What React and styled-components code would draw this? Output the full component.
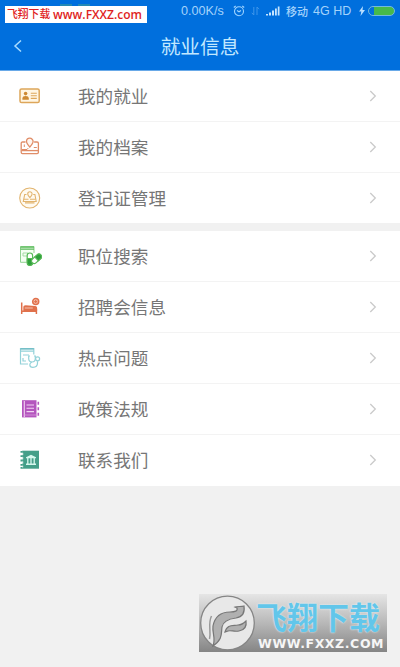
import styled, { createGlobalStyle } from "styled-components";

const GlobalStyle = createGlobalStyle`
  body {
    margin: 0;
    background: #f1f1f1;
    font-family: Roboto, "Noto Sans CJK SC", sans-serif;
  }
`;

const CardIcon = () => (
  <svg width="24" height="24" viewBox="0 0 24 24" fill="none" stroke="#dda65a" strokeWidth="1.5">
    <rect x="2" y="5" width="19.2" height="13.6" rx="1.6" fill="#fff6e4" />
    <circle cx="7.6" cy="9.6" r="1.8" fill="#cd8a35" stroke="none" />
    <path d="M4.400 15.800v-1.400c0-1.700 1.200-2.500 3.200-2.500s3.200.8 3.200 2.500v1.400z" fill="#cd8a35" stroke="none" />
    <path d="M12.800 9.200h6M12.800 11.800h6M12.800 14.400h6" strokeWidth="1.100" />
  </svg>
);

const MapIcon = () => (
  <svg width="24" height="24" viewBox="0 0 24 24" fill="none" stroke="#e08d68" strokeWidth="1.300">
    <path d="M7.500 7H4.500c-.8 0-1.300.5-1.300 1.300v9c0 .8.5 1.300 1.300 1.300h14.600c.8 0 1.300-.5 1.300-1.300v-9c0-.8-.5-1.300-1.300-1.300h-3" />
    <path d="M11.800 12C9.600 9.500 8.500 8.200 8.500 6.500a3.300 3.300 0 0 1 6.600 0c0 1.700-1.100 3-3.300 5.500z" fill="#fff6f0" />
    <path d="M3.500 15.600h17" />
    <path d="M4 14.500h5l1.300-1.500M6.300 9.500v2.500M15.800 12.500h3" strokeWidth="1" />
  </svg>
);

const BadgeIcon = () => (
  <svg width="24" height="24" viewBox="0 0 24 24" fill="none" stroke="#e2b46e" strokeWidth="1.100">
    <circle cx="11.700" cy="12" r="10" fill="#fffaf0" />
    <path d="M8.500 8.500H6.700L5.300 15.500h12.900l-1.300-7h-1.700" />
    <path d="M11.900 11.700c-1.500-1.700-2.200-2.600-2.200-3.700a2.200 2.200 0 0 1 4.400 0c0 1.100-.7 2-2.200 3.700z" />
    <path d="M6 13.300h4.500M12 13.300h5.500M7 16.900h9.500" />
  </svg>
);

const PillIcon = () => (
  <svg width="24" height="24" viewBox="0 0 24 24" fill="none" stroke="#57b957" strokeWidth="1">
    <path d="M16 9V2.500H2.500v15.800H8.500" stroke="#92d292" fill="#f4fff2" />
    <path d="M2.500 3.200h13.500M2.500 5.200h13.500" strokeWidth="1.200" />
    <path d="M5 9h5v3H5z" stroke="#a5daa5" />
    <rect x="9.200" y="9" width="5.400" height="12.500" rx="2.700" fill="#fff" strokeWidth="1.200" />
    <path d="M9.200 14.500h5.400v4.300a2.700 2.700 0 0 1-5.400 0z" fill="#2f9f3b" />
    <g transform="rotate(48 19 15)">
      <rect x="16" y="9.500" width="5.200" height="11.500" rx="2.600" fill="#fff" strokeWidth="1.200" />
      <path d="M16 15.300v-3.200a2.600 2.600 0 0 1 5.200 0v3.200z" fill="#2f9f3b" />
    </g>
  </svg>
);

const BedIcon = () => (
  <svg width="24" height="24" viewBox="0 0 24 24" fill="none" stroke="#e0714c" strokeWidth="1.500">
    <path d="M3.700 7.500v11.500M18.400 14v5M3.700 16.200h14.700" />
    <path d="M5.300 14.500v-1.800c0-1.800.8-2.500 2.300-2.500l9.600.8c1.400.2 1.900.9 1.900 2.200V16H5.300z" fill="#e0714c" stroke="none" />
    <path d="M6.800 13h8" stroke="#f8cdbd" strokeWidth=".9" />
    <circle cx="17.700" cy="6.600" r="3" fill="#f5c1ae" />
    <path d="M17.700 5.100v3M16.200 6.600h3" strokeWidth="1.100" />
  </svg>
);

const StethoscopeIcon = () => (
  <svg width="24" height="24" viewBox="0 0 24 24" fill="none" stroke="#93d2d9" strokeWidth="1.200">
    <path d="M15.800 8.500V2.500H2.500v15.500h7.500" />
    <path d="M2.500 2.900h13.300" strokeWidth="1.500" stroke="#70bcc5" />
    <path d="M2.500 5.200h13.300M5 9h6M5 12v3h3" />
    <path d="M12 10h-1.300v2.500c0 2.200 1.300 3.500 3.300 3.500s3.300-1.300 3.300-3.500V10H16" />
    <path d="M13.800 16c-1.500.8-2 1.700-2 2.700 0 1.600 1.300 2.600 3.100 2.600 2.600 0 4.600-1.700 4.600-4.300v-1.800" />
    <circle cx="19.600" cy="12.800" r="2" fill="#fff" />
  </svg>
);

const BookIcon = () => (
  <svg width="24" height="24" viewBox="0 0 24 24" fill="#b455be">
    <path d="M4 3.200h14.500v17.200H4z" />
    <path d="M19.500 4.800h1.600v3h-1.600zM19.500 10.200h1.600v3h-1.600zM19.500 15.800h1.600v3h-1.600z" />
    <path d="M6.300 4v16M8.500 8h7.500M8.500 11.300h7.500M8.500 14.600h7.500" stroke="#f1d4f3" strokeWidth="1.100" />
    <path d="M6.500 18h12" stroke="#d493d9" strokeWidth=".9" />
  </svg>
);

const BankIcon = () => (
  <svg width="24" height="24" viewBox="0 0 24 24" fill="#449f89">
    <path d="M4.200 2.700h16.800v18H4.200z" />
    <path d="M2.500 3h2v1.800h-2zM2.500 7.300h2v1.800h-2zM2.500 11.600h2v1.800h-2zM2.500 15.900h2v1.800h-2zM2.500 19h2v1.700h-2z" />
    <path d="M4.700 4.800v14.500" stroke="#fff" strokeWidth="1" strokeDasharray="2.300 2" />
    <path d="M8 9.200l5-2.500 5 2.500v1H8zM8 15.600h10v1.300H8z" fill="#d6f8ee" />
    <path d="M9.800 10v6M13 10v6M16.200 10v6" stroke="#d6f8ee" strokeWidth="1.300" />
  </svg>
);

const Chevron = () => (
  <svg width="8" height="12" viewBox="0 0 8 12" fill="none" stroke="#cacaca" strokeWidth="1.300">
    <path d="M1.300 1l5 5-5 5" />
  </svg>
);

const groups = [
  [
    { label: "我的就业", Icon: CardIcon },
    { label: "我的档案", Icon: MapIcon },
    { label: "登记证管理", Icon: BadgeIcon },
  ],
  [
    { label: "职位搜索", Icon: PillIcon },
    { label: "招聘会信息", Icon: BedIcon },
    { label: "热点问题", Icon: StethoscopeIcon },
    { label: "政策法规", Icon: BookIcon },
    { label: "联系我们", Icon: BankIcon },
  ],
];

const StatusBar = () => (
  <Status>
    <Speed>0.00K/s</Speed>
    <svg width="12" height="12" viewBox="0 0 12 12" fill="none" stroke="#9fd4ff" strokeWidth="1.100">
      <circle cx="6" cy="6.300" r="4.500" />
      <path d="M4 5.500l2 1.300 2-1.300M.8 2.500L2.700 1M11.200 2.500L9.300 1" />
    </svg>
    <Arrows width="9" height="10" viewBox="0 0 9 10" fill="none" stroke="#3f96ea" strokeWidth="1">
      <path d="M2.800 1v8L.8 6.800M6 9V1l2 2.200" />
    </Arrows>
    <Signal width="14" height="10" viewBox="0 0 14 10" fill="#c4e4ff">
      <path d="M0 8h2v1.500H0zM3 6.500h2v3H3zM6 4.500h2v5H6zM9 2.500h1.800v7H9zM11.800 0.500h1.700v9h-1.700z" />
    </Signal>
    <Carrier>移动</Carrier>
    <Network>4G HD</Network>
    <Bolt width="6" height="10" viewBox="0 0 6 10" fill="#b9dfff">
      <path d="M4 0L0 5.500h2.300L1.500 10 6 4H3.500z" />
    </Bolt>
    <Battery />
  </Status>
);

const Watermark = () => (
  <WatermarkBox>
    <svg width="57" height="58" viewBox="0 0 57 58">
      <circle cx="28.500" cy="29" r="26.800" fill="#e8e8e8" stroke="#858585" strokeWidth="1.300" />
      <path
        d="M14 52c3-8-1-13 0-20 2-10 9-14 17-14 5 0 8-1 7-4l-2-1c3-1 6 0 9-1 1 7-2 11-8 12-8 1-13 3-14 9-1 7 1 12-9 19z"
        fill="#b0b0b0" stroke="#777" strokeWidth="1.200"
      />
      <path
        d="M26 38c2-8 8-6 13-7 4 0 6-2 8-4 1 6-2 9-7 10-5 1-8-1-11 0z"
        fill="#b0b0b0" stroke="#777" strokeWidth="1.200"
      />
      <path d="M10.500 45c2-8-2-15 2-23" fill="none" stroke="#999" strokeWidth="1.500" />
    </svg>
    <WatermarkText>
      <WatermarkName>飞翔下载</WatermarkName>
      <WatermarkUrl>WWW.FXXZ.COM</WatermarkUrl>
    </WatermarkText>
  </WatermarkBox>
);

const App = () => {
  return (
    <Page>
      <GlobalStyle />
      <Header>
        <StatusBar />
        <TitleBar>
          <svg width="10" height="14" viewBox="0 0 10 14" fill="none" stroke="#a9dcff" strokeWidth="1.500">
            <path d="M8 1.500L2 7l6 5.500" />
          </svg>
          <Title>就业信息</Title>
        </TitleBar>
        <SiteTag>
          <TagName>飞翔下载</TagName>
          <TagUrl>www.FXXZ.com</TagUrl>
        </SiteTag>
      </Header>
      {groups.map((rows, i) => (
        <Group key={i}>
          {rows.map(({ label, Icon }) => (
            <Row key={label}>
              <Icon />
              <Label>{label}</Label>
              <Chevron />
            </Row>
          ))}
        </Group>
      ))}
      <Watermark />
    </Page>
  );
};

export default App;

const Page = styled.div`
  position: relative;
  height: 667px;
  overflow: hidden;
  background: #f1f1f1;
`;

const Header = styled.header`
  position: relative;
  box-sizing: border-box;
  height: 71px;
  background: #006fdd;
  border-bottom: 1px solid #69a9e8;
`;

const Status = styled.div`
  display: flex;
  align-items: center;
  justify-content: flex-end;
  height: 22px;
  padding-right: 5px;
  color: #a4d3fb;
  white-space: nowrap;
`;

const Speed = styled.span`
  width: 46px;
  margin-right: 6px;
  font-family: "Liberation Sans", sans-serif;
  font-size: 12.600px;
`;

const Arrows = styled.svg`
  margin-left: 6px;
`;

const Signal = styled.svg`
  margin-left: 6px;
`;

const Carrier = styled.span`
  width: 22px;
  margin-left: 6px;
  font-size: 11px;
  font-weight: 500;
`;

const Network = styled.span`
  width: 40px;
  margin-left: 5px;
  font-family: "Liberation Sans", sans-serif;
  font-size: 12.500px;
`;

const Bolt = styled.svg`
  margin-left: 6px;
`;

const Battery = styled.div`
  box-sizing: border-box;
  width: 27px;
  height: 10px;
  margin-left: 3px;
  border: 1px solid #72b9dc;
  border-radius: 5px;
  background: linear-gradient(to right, #006fdd 5px, #47b94a 5px);
`;

const TitleBar = styled.div`
  display: flex;
  align-items: center;
  height: 48px;
  padding-left: 13px;
`;

const Title = styled.h1`
  flex: 1;
  margin: 3px 23px 0 0;
  color: #c2e8ff;
  font-size: 19.700px;
  font-weight: 400;
  line-height: 28px;
  text-align: center;
`;

/* label stuck over the left end of the status bar */
const SiteTag = styled.div`
  position: absolute;
  top: 6px;
  left: 5px;
  display: flex;
  align-items: center;
  box-sizing: border-box;
  width: 142px;
  height: 17px;
  padding: 1px 0 0 2px;
  background: #fff;
  color: #df1e23;
  white-space: nowrap;

  /* the two green notification icons still peek out on top */
  &::before {
    content: "";
    position: absolute;
    top: -2px;
    left: 55px;
    width: 30px;
    height: 2px;
    background: linear-gradient(to right, #2389b5 12px, transparent 12px, transparent 18px, #2389b5 18px);
  }
`;

const TagName = styled.span`
  width: 43px;
  margin-right: 3px;
  font-size: 10.800px;
  font-weight: 500;
  line-height: 14px;
`;

const TagUrl = styled.span`
  font-family: "Open Sans", sans-serif;
  font-size: 12px;
  font-weight: 600;
  line-height: 14px;
`;

const Group = styled.section`
  background: #fff;

  & + & {
    margin-top: 7px;
  }
`;

const Row = styled.div`
  display: flex;
  align-items: center;
  box-sizing: border-box;
  height: 51px;
  padding: 0 23px 0 18px;
  border-bottom: 1px solid #f3f3f3;

  &:last-child {
    border-bottom-color: #f1f1f1;
  }

  ${Group} + ${Group} > &:last-child {
    border-bottom-color: #fff;
  }
`;

const Label = styled.span`
  flex: 1;
  margin: 2px 0 0 36px;
  color: #767676;
  font-size: 17.600px;
  font-weight: 400;
  line-height: 26px;
`;

const WatermarkBox = styled.div`
  position: absolute;
  top: 594px;
  left: 199px;
  display: flex;
  width: 188px;
  height: 58px;
  background: linear-gradient(#e5e5e5, #b8b8b8 50%, #858585);
`;

const WatermarkText = styled.div`
  display: flex;
  flex-direction: column;
  width: 131px;
  padding-top: 8px;
  white-space: nowrap;
`;

const WatermarkName = styled.span`
  color: #62c6ea;
  font-size: 31px;
  font-weight: 700;
  line-height: 34px;
  text-shadow: 0 0 2px #e9faff;
`;

const WatermarkUrl = styled.span`
  margin-left: 2px;
  color: #f6f6f6;
  font-family: "DejaVu Sans", sans-serif;
  font-size: 12.500px;
  font-weight: 700;
  letter-spacing: 0.600px;
  line-height: 15px;
`;
